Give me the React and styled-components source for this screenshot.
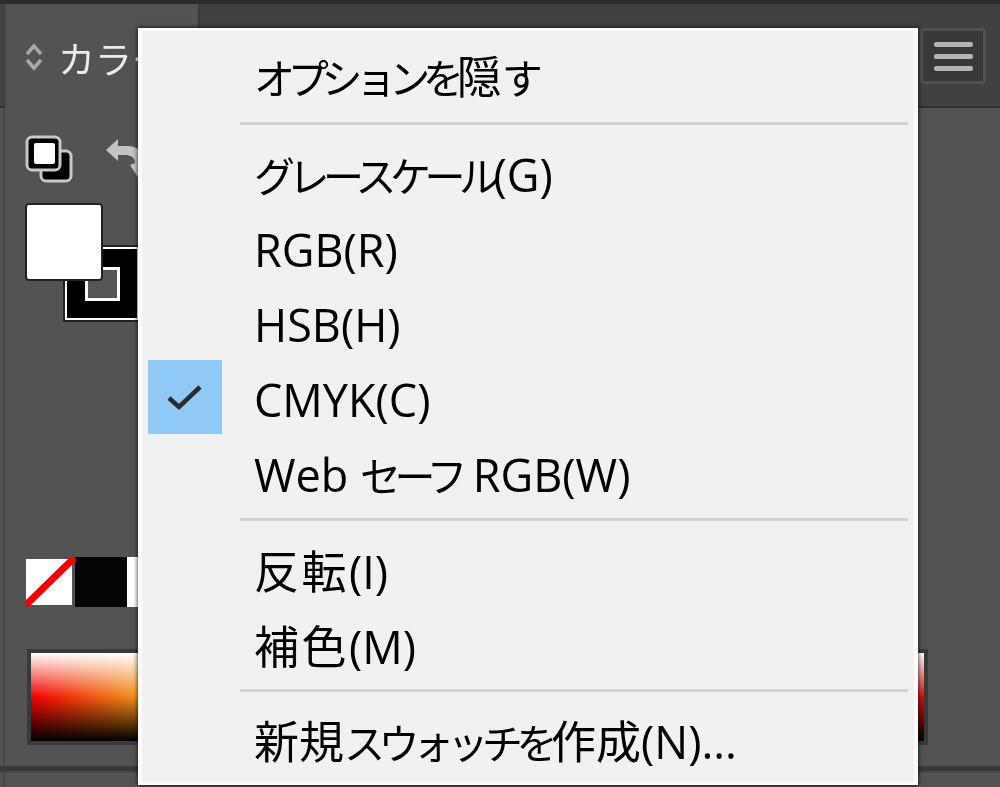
import React from "react";
import styled, { createGlobalStyle } from "styled-components";

const GlobalStyle = createGlobalStyle`
  html, body { margin: 0; padding: 0; background: #424242; }
`;

const Page = styled.div`
  position: relative;
  width: 1000px;
  height: 787px;
  overflow: hidden;
  display: flex;
  flex-direction: column;
  background: #535353;
  font-family: "Noto Sans CJK JP", "Noto Sans", sans-serif;
`;

const TopEdge = styled.div`
  height: 4px;
  background: #2c2c2c;
`;

const TabBar = styled.div`
  height: 102px;
  display: flex;
  background: #414141;
  border-bottom: 2px solid #2f2f2f;
`;

const Tab = styled.div`
  width: 195px;
  margin-left: 5px;
  height: 104px;
  box-sizing: border-box;
  padding: 29px 0 0 18px;
  display: flex;
  align-items: flex-start;
  gap: 14px;
  background: #535353;
  border-left: 1px solid #474747;
  border-right: 2px solid #3a3a3a;
`;

const TabTitle = styled.span`
  font-size: 37px;
  line-height: 50px;
  color: #ececec;
  white-space: nowrap;
  filter: blur(0.5px);
`;

const Stepper = styled.svg`
  margin-top: 9px;
  flex: none;
  filter: blur(0.4px);
`;

const TabSpacer = styled.div`
  flex: 1;
  display: flex;
  justify-content: flex-end;
  padding: 24px 14px 0 0;
`;

const MenuButton = styled.div`
  width: 66px;
  height: 56px;
  box-sizing: border-box;
  display: flex;
  flex-direction: column;
  justify-content: center;
  align-items: center;
  gap: 7px;
  background: #383838;
  border: 3px solid #505050;
  border-radius: 3px;
`;

const Bar = styled.span`
  width: 39px;
  height: 5px;
  border-radius: 2px;
  background: #b4b4b4;
  filter: blur(0.4px);
`;

const Body = styled.div`
  flex: 1;
  display: flex;
  flex-direction: column;
  padding: 27px 0 0 25px;
  border-left: 2px solid #474747;
  margin-left: 3px;
  box-sizing: border-box;
  min-height: 0;
`;

const IconRow = styled.div`
  display: flex;
  align-items: center;
  gap: 29px;
  height: 48px;
  margin-left: -5px;
`;

const ColorPair = styled.div`
  position: relative;
  width: 114px;
  height: 118px;
  margin: 22px 0 0 -3px;
`;

const FillSwatch = styled.div`
  position: absolute;
  z-index: 1;
  left: 0;
  top: 0;
  width: 74px;
  height: 74px;
  background: #fff;
  border-radius: 2px;
  box-shadow: 0 0 0 2px #222;
`;

const StrokeSwatch = styled.div`
  position: absolute;
  left: 38px;
  top: 42px;
  width: 74px;
  height: 73px;
  box-sizing: border-box;
  background: #000;
  border: 2px solid #fff;
  box-shadow: 0 0 0 2px #222;
  display: flex;
  align-items: center;
  justify-content: center;
`;

const StrokeHole = styled.div`
  width: 35px;
  height: 34px;
  box-sizing: border-box;
  background: #555;
  border: 3px solid #fff;
`;

const SwatchRow = styled.div`
  display: flex;
  margin: 234px 0 0 -4px;
  height: 50px;
`;

const NoneSwatch = styled.svg`
  flex: none;
`;

const Solid = styled.div`
  width: ${(p) => p.$w}px;
  height: 50px;
  flex: none;
  background: ${(p) => p.$color};
`;

const Spectrum = styled.div`
  width: 893px;
  height: 88px;
  margin: 46px 0 0 1px;
  flex: none;
  box-shadow: 0 0 0 4px #3a3a3a;
  background:
    linear-gradient(to bottom, #fff 0%, rgba(255, 255, 255, 0) 50%, rgba(0, 0, 0, 0) 50%, #000 100%),
    linear-gradient(to right, #f00000 0%, #f0a020 13%, #f0a020 20%, #d01010 100%);
`;

const BottomLines = styled.div`
  margin: 25px 0 0 -30px;
  height: 5px;
  background: #383838;
  border-bottom: 2px solid #474747;
`;

const Menu = styled.div`
  position: absolute;
  left: 138px;
  top: 28px;
  width: 780px;
  height: 757px;
  box-sizing: border-box;
  padding: 7px 6px 0 4px;
  background: #f1f1f1;
  border-top: 3px solid #fbfbfb;
  border-left: 4px solid #fafafa;
  border-right: 4px solid #fafafa;
  border-bottom: 3px solid #fafafa;
  box-shadow: 0 0 4px 1px rgba(0, 0, 0, 0.6);
  color: #000;
  font-size: 41px;
`;

const Item = styled.div`
  height: 75px;
  display: flex;
  align-items: center;
  white-space: nowrap;
`;

const CheckCell = styled.div`
  width: 74px;
  height: 74px;
  flex: none;
  margin: 0 0 6px 2px;
  display: flex;
  align-items: center;
  justify-content: center;
  background: ${(p) => (p.$on ? "#90c8f6" : "transparent")};
`;

const Label = styled.span`
  margin-left: 32px;
  line-height: 75px;
  filter: blur(0.45px);
`;

const Latin = styled.span`
  font-family: "Open Sans", sans-serif;
  font-size: 45px;
`;

// kana in this menu font are much narrower than the kanji
const Kana = styled.span`
  letter-spacing: ${(p) => p.$track ?? -6.5}px;
`;

const Kanji = styled.span`
  font-size: 45px;
  letter-spacing: ${(p) => p.$track ?? 0}px;
`;

const Separator = styled.div`
  height: 3px;
  margin: ${(p) => p.$before}px 0 ${(p) => p.$after}px 94px;
  background: #d2d2d2;
`;

const items = [
  [{ text: "オプションを隠す", kana: -7.2 }],
  [
    { text: "グレースケール(G)" },
    { text: "RGB(R)" },
    { text: "HSB(H)" },
    { text: "CMYK(C)", checked: true },
    { text: "Web セーフ RGB(W)" },
  ],
  [
    { text: "反転(I)", kanji: 2.5 },
    { text: "補色(M)", kanji: 2.5 },
  ],
  [{ text: "新規スウォッチを作成(N)..." }],
];

const gaps = [
  [9, 12],
  [6, 12],
  [6, 11],
];

function MixedText({ item }) {
  return item.text.split(/([A-Za-z(). ]+|[\u4e00-\u9fff]+)/).map((part, i) => {
    if (/[A-Za-z(). ]/.test(part)) return <Latin key={i}>{part}</Latin>;
    if (/[\u4e00-\u9fff]/.test(part))
      return (
        <Kanji key={i} $track={item.kanji}>
          {part}
        </Kanji>
      );
    return (
      <Kana key={i} $track={item.kana}>
        {part}
      </Kana>
    );
  });
}

function MenuList() {
  return (
    <Menu>
      {items.map((group, i) => (
        <React.Fragment key={i}>
          {group.map((item) => (
            <Item key={item.text}>
              <CheckCell $on={item.checked}>
                {item.checked && (
                  <svg width="36" height="28" viewBox="0 0 36 28">
                    <path d="M2 15 L12 24 L33 4" fill="none" stroke="#2b2b2b" strokeWidth="4.5" />
                  </svg>
                )}
              </CheckCell>
              <Label>
                <MixedText item={item} />
              </Label>
            </Item>
          ))}
          {i < gaps.length && <Separator $before={gaps[i][0]} $after={gaps[i][1]} />}
        </React.Fragment>
      ))}
    </Menu>
  );
}

export default function App() {
  return (
    <Page>
      <GlobalStyle />
      <TopEdge />
      <TabBar>
        <Tab>
          <Stepper width="20" height="30" viewBox="0 0 20 30">
            <path d="M3 12 L10 4 L17 12 M3 18 L10 26 L17 18" fill="none" stroke="#a8a8a8" strokeWidth="3.5" />
          </Stepper>
          <TabTitle>カラー</TabTitle>
        </Tab>
        <TabSpacer>
          <MenuButton>
            <Bar />
            <Bar />
            <Bar />
          </MenuButton>
        </TabSpacer>
      </TabBar>
      <Body>
        <IconRow>
          <svg width="49" height="49" viewBox="0 0 49 49">
            <rect x="16" y="16" width="30" height="30" rx="5" fill="#000" stroke="#c8c8c8" strokeWidth="3" />
            <rect x="2" y="2" width="33" height="33" rx="5" fill="#000" stroke="#c8c8c8" strokeWidth="3" />
            <rect x="9" y="8" width="21" height="21" rx="2" fill="#fff" />
          </svg>
          <svg width="40" height="48" viewBox="0 0 40 48">
            <path
              d="M15 4 L3 15 L15 26 L15 20 L24 20 Q32 21 32 28 L27 30 L36 44 L40 40 L40 24 Q38 11 24 11 L15 11 Z"
              fill="#c4c4c4"
            />
          </svg>
        </IconRow>
        <ColorPair>
          <StrokeSwatch>
            <StrokeHole />
          </StrokeSwatch>
          <FillSwatch />
        </ColorPair>
        <SwatchRow>
          <NoneSwatch width="49" height="50" viewBox="0 0 49 50">
            <rect x="0" y="2" width="46" height="46" fill="#fff" />
            <path d="M2 46 L46 3" stroke="#f40000" strokeWidth="7" strokeLinecap="round" />
          </NoneSwatch>
          <Solid $w="52" $color="#050505" />
          <Solid $w="20" $color="#fff" />
        </SwatchRow>
        <Spectrum />
        <BottomLines />
      </Body>
      <MenuList />
    </Page>
  );
}
